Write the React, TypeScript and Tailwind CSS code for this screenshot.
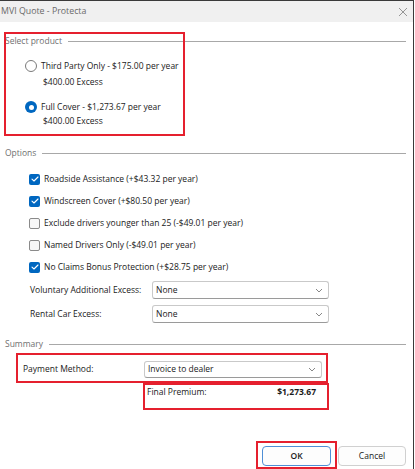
import React from "react";

function Header({ label, className }: { label: string; className: string }) {
  return (
    <div className={`flex h-[12px] items-center gap-[6px] pl-[5px] pr-[7px] ${className}`}>
      <span className="text-[#707070] leading-none">{label}</span>
      <div className="h-px flex-1 bg-[#a8a8a8]" />
    </div>
  );
}

function Radio({ checked }: { checked?: boolean }) {
  return checked ? (
    <div className="flex h-[12px] w-[12px] items-center justify-center rounded-full bg-[#0067c0]">
      <div className="h-[5px] w-[5px] rounded-full bg-white" />
    </div>
  ) : (
    <div className="h-[12px] w-[12px] rounded-full border border-[#7a7a7a] bg-white" />
  );
}

function Check({ checked }: { checked?: boolean }) {
  return checked ? (
    <div className="flex h-[11px] w-[11px] items-center justify-center rounded-[2px] bg-[#0067c0]">
      <svg width="8" height="6" viewBox="0 0 8 6">
        <path d="M1 3.2 L3 5 L7 1" stroke="white" strokeWidth="1.1" fill="none" strokeLinecap="round" strokeLinejoin="round" />
      </svg>
    </div>
  ) : (
    <div className="h-[11px] w-[11px] rounded-[2px] border border-[#8a8a8a] bg-[#f7f7f7]" />
  );
}

function Chevron() {
  return (
    <svg width="8" height="5" viewBox="0 0 8 5">
      <path d="M1 1 L4 4 L7 1" stroke="#7a7a7a" strokeWidth="0.9" fill="none" />
    </svg>
  );
}

function Select({ value, className }: { value: string; className: string }) {
  return (
    <div
      className={`flex items-center justify-between rounded-[3px] border border-[#c9c9c9] border-b-[#9a9a9a] bg-white pl-[3px] pr-[5px] leading-none text-[#1a1a1a] ${className}`}
    >
      <span>{value}</span>
      <Chevron />
    </div>
  );
}

function CheckRow({ checked, label, className }: { checked?: boolean; label: string; className: string }) {
  return (
    <div className={`ml-[29px] flex h-[14px] items-center gap-[4px] ${className}`}>
      <Check checked={checked} />
      <span className="leading-none">{label}</span>
    </div>
  );
}

export default function App() {
  return (
    <div
      className="relative h-[469px] w-[414px] border-t border-r border-[#3a3a3a] bg-white text-[8.5px] text-[#1a1a1a]"
      style={{ fontFamily: '"Open Sans", "Liberation Sans", sans-serif' }}
    >
      {/* Title bar */}
      <div className="flex h-[21px] items-center justify-between bg-[#f0f0f0] pl-[1px] pr-[5px]">
        <span className="text-[8.8px] leading-none text-[#6a6a6a]">MVI Quote - Protecta</span>
        <svg width="10" height="10" viewBox="0 0 10 10">
          <path d="M1 1 L9 9 M9 1 L1 9" stroke="#8a8a8a" strokeWidth="0.9" />
        </svg>
      </div>

      {/* Select product */}
      <Header label="Select product" className="mt-[13px]" />
      <div className="ml-[25px] mt-[12px] flex h-[14px] items-center gap-[4px]">
        <Radio />
        <span className="leading-none">Third Party Only - $175.00 per year</span>
      </div>
      <div className="ml-[43px] mt-[3px] flex h-[12px] items-center leading-none">$400.00 Excess</div>
      <div className="ml-[25px] mt-[12px] flex h-[14px] items-center gap-[4px]">
        <Radio checked />
        <span className="leading-none">Full Cover - $1,273.67 per year</span>
      </div>
      <div className="ml-[43px] mt-[1px] flex h-[12px] items-center leading-none">$400.00 Excess</div>

      {/* Options */}
      <Header label="Options" className="mt-[20px]" />
      <CheckRow checked label="Roadside Assistance (+$43.32 per year)" className="mt-[13px]" />
      <CheckRow checked label="Windscreen Cover (+$80.50 per year)" className="mt-[8px]" />
      <CheckRow label="Exclude drivers younger than 25 (-$49.01 per year)" className="mt-[8px]" />
      <CheckRow label="Named Drivers Only (-$49.01 per year)" className="mt-[8px]" />
      <CheckRow checked label="No Claims Bonus Protection (+$28.75 per year)" className="mt-[8px]" />

      <div className="ml-[30px] mt-[7px] flex h-[18px] items-center">
        <span className="w-[122px] leading-none">Voluntary Additional Excess:</span>
        <Select value="None" className="h-[18px] w-[177px]" />
      </div>
      <div className="ml-[30px] mt-[6px] flex h-[18px] items-center">
        <span className="w-[122px] leading-none">Rental Car Excess:</span>
        <Select value="None" className="h-[18px] w-[177px]" />
      </div>

      {/* Summary */}
      <Header label="Summary" className="mt-[15px]" />
      <div className="ml-[23px] mt-[11px] flex h-[17px] items-center">
        <span className="w-[121px] leading-none">Payment Method:</span>
        <Select value="Invoice to dealer" className="h-[17px] w-[178px]" />
      </div>
      <div className="ml-[147px] mt-[8px] flex h-[12px] w-[169px] items-center justify-between leading-none">
        <span className="font-medium">Final Premium:</span>
        <span className="font-bold">$1,273.67</span>
      </div>

      {/* Buttons */}
      <div className="mt-[48px] flex justify-end gap-[7px] pr-[7px]">
        <button className="flex h-[20px] w-[69px] items-center justify-center rounded-[4px] border border-[#4f8fd6] bg-[#fdfdfd] font-semibold leading-none text-[#1a1a1a]">
          OK
        </button>
        <button className="flex h-[20px] w-[68px] items-center justify-center rounded-[4px] border border-[#d0d0d0] bg-[#fdfdfd] font-medium leading-none text-[#1a1a1a]">
          Cancel
        </button>
      </div>

      {/* Red annotation boxes */}
      <div className="pointer-events-none absolute left-[4px] top-[31px] h-[104px] w-[181px] border-2 border-[#e5202e]" />
      <div className="pointer-events-none absolute left-[16px] top-[352px] h-[30px] w-[312px] border-2 border-[#e5202e]" />
      <div className="pointer-events-none absolute left-[143px] top-[382px] h-[27px] w-[186px] border-2 border-[#e5202e]" />
      <div className="pointer-events-none absolute left-[256px] top-[440px] h-[28px] w-[81px] border-2 border-[#e5202e]" />
    </div>
  );
}
